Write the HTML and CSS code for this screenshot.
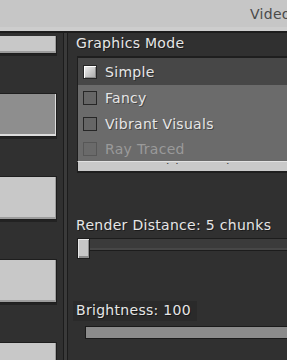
FILE: index.html
```html
<!DOCTYPE html>
<html lang="en">
<head>
  <meta charset="UTF-8" />
  <meta name="viewport" content="width=device-width, initial-scale=1" />
  <title>Video Settings</title>
  <link rel="stylesheet" href="styles.css">
</head>
<body>

  <header class="topbar">
    <span class="topbar-title">Video Settings</span>
  </header>

  <div class="layout">
    <nav class="sidebar">
      <div class="sidebar-list">
        <div class="side-btn"></div>
        <div class="side-btn active"></div>
        <div class="side-btn"></div>
        <div class="side-btn"></div>
        <div class="side-btn"></div>
      </div>
    </nav>

    <div class="divider"></div>

    <main class="panel">
      <div class="field-label">Graphics Mode</div>

      <div class="dropdown">
        <div class="dropdown-value"><span>Fancy Graphics Mode Here</span></div>
        <ul class="dropdown-options">
          <li class="option selected"><span class="check"></span>Simple</li>
          <li class="option"><span class="check"></span>Fancy</li>
          <li class="option"><span class="check"></span>Vibrant Visuals</li>
          <li class="option disabled"><span class="check"></span>Ray Traced</li>
        </ul>
      </div>

      <div class="field-label slider-label">Render Distance: 5 chunks</div>
      <div class="slider">
        <div class="slider-track"></div>
        <div class="slider-thumb"></div>
      </div>

      <div class="field-label slider-label focused">Brightness: 100</div>
      <div class="slider full">
        <div class="slider-track"></div>
      </div>
    </main>
  </div>

</body>
</html>
```

FILE: styles.css
```css
html, body {
  margin: 0;
  padding: 0;
}
body {
  width: 287px;
  height: 360px;
  overflow: hidden;
  background: #303030;
  font-family: "DejaVu Sans", sans-serif;
  font-size: 14px;
  letter-spacing: 0.3px;
  color: #e6e6e6;
}

/* top bar */
.topbar {
  height: 31px;
  background: #c6c6c6;
  box-shadow: inset 0 -4px 0 #cdcdcd;
  border-bottom: 2px solid #1c1c1c;
  overflow: hidden;
  white-space: nowrap;
}
.topbar-title {
  display: block;
  padding-left: 250px;
  line-height: 29px;
  color: #4a4a4a;
}

.layout {
  display: flex;
  height: 327px;
}

/* left column */
.sidebar {
  width: 63px;
  flex: none;
  padding-top: 3px;
  box-sizing: border-box;
  background: #303030;
}
.sidebar-list {
  height: 100%;
  overflow: hidden;
  display: flex;
  flex-direction: column;
  gap: 39px;
}
.side-btn {
  flex: none;
  width: 57px;
  height: 44px;
  box-sizing: border-box;
  background: #c8c8c8;
  border: 1px solid #1e1e1e;
  border-left: none;
  box-shadow: inset -1px -2px 0 #9c9c9c, 0 2px 0 #222;
}
.side-btn:first-child {
  margin-top: -26px;
}
.side-btn.active {
  background: #8e8e8e;
  box-shadow: inset -1px -2px 0 #dcdcdc, 0 2px 0 #222;
}

.divider {
  width: 5px;
  flex: none;
  box-sizing: border-box;
  background: #3a3a3a;
  border-left: 1px solid #1c1c1c;
  border-right: 1px solid #1c1c1c;
}

/* right panel */
.panel {
  flex: 1;
  min-width: 0;
  padding: 2px 0 0 8px;
}
.field-label {
  line-height: 16px;
  white-space: nowrap;
  text-shadow: 1px 1px 0 rgba(0, 0, 0, 0.45);
}

.dropdown {
  position: relative;
  margin: 5px -10px 0 1px;
  height: 117px;
}
.dropdown-value {
  height: 100%;
  box-sizing: border-box;
  padding: 104px 0 0 6px;
  background: #c9c9c9;
  border: 1px solid #1e1e1e;
  border-bottom-width: 2px;
  overflow: hidden;
}
.dropdown-value span {
  display: block;
  height: 3px;
  overflow: hidden;
  margin-top: 0;
  color: #4a4a4a;
  font-size: 14px;
  line-height: 16px;
  white-space: nowrap;
  position: relative;
}
.dropdown-options {
  position: absolute;
  top: 0;
  left: 0;
  right: 0;
  margin: 0;
  padding: 0;
  list-style: none;
  border-top: 2px solid #1e1e1e;
  border-left: 1px solid #1e1e1e;
  border-bottom: 1px solid #e2e2e2;
}
.option {
  display: flex;
  align-items: center;
  gap: 8px;
  height: 26px;
  padding-left: 5px;
  background: #6b6b6b;
  white-space: nowrap;
  text-shadow: 1px 1px 0 rgba(0, 0, 0, 0.35);
}
.option.selected {
  height: 27px;
  background: #474747;
}
.option.disabled {
  height: 24px;
  color: #9a9a9a;
  text-shadow: none;
}
.check {
  width: 14px;
  height: 14px;
  box-sizing: border-box;
  flex: none;
  background: #666;
  border: 1px solid #262626;
}
.selected .check {
  background: linear-gradient(135deg, #f0f0f0, #a8a8a8);
  box-shadow: inset 1px 1px 0 #fff, inset -1px -1px 0 #8c8c8c;
}
.disabled .check {
  background: #6a6a6a;
  border-color: #575757;
}

/* sliders */
.slider-label {
  margin-top: 44px;
}
.slider {
  position: relative;
  margin: 4px -10px 0 1px;
  height: 21px;
}
.slider-track {
  margin-top: 5px;
  height: 13px;
  box-sizing: border-box;
  background: #3b3b3b;
  border: 1px solid #1c1c1c;
  box-shadow: inset 0 -2px 0 #474747;
}
.slider-thumb {
  position: absolute;
  left: 0;
  top: 0;
  width: 13px;
  height: 21px;
  box-sizing: border-box;
  background: #c6c6c6;
  border: 1px solid #1c1c1c;
  box-shadow: inset 1px 1px 0 #e8e8e8, inset -1px -2px 0 #8a8a8a;
}
.focused {
  display: inline-block;
  margin-left: -3px;
  padding: 1px 6px 3px 3px;
  margin-top: 42px;
  background: #2a2a2a;
}
.slider.full {
  margin: 5px -10px 0 9px;
  height: 14px;
}
.slider.full .slider-track {
  margin-top: 0;
  background: #8b8b8b;
  border-color: #1a1a1a;
  box-shadow: none;
}
```
